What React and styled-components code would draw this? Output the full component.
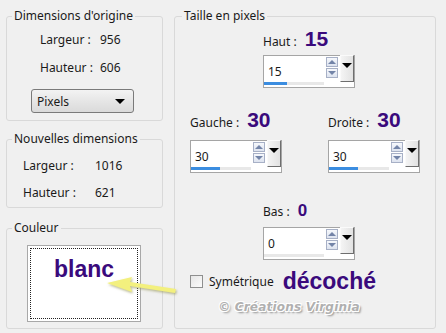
import React from "react";
import styled, { createGlobalStyle } from "styled-components";

const Global = createGlobalStyle`
  html, body {
    margin: 0;
    padding: 0;
    background: #f0f0f0;
  }
  body {
    font-family: "Noto Sans", "Open Sans", sans-serif;
    font-size: 12px;
    color: #1a1a1a;
  }
`

const Page = styled.div`
  position: relative;
  width: 446px;
  height: 333px;
  box-sizing: border-box;
  padding: 8px 10px 0 6px;
  display: flex;
  gap: 11px;
  overflow: hidden;
`

const Column = styled.div`
  display: flex;
  flex-direction: column;
  width: 157px;
`

const Group = styled.fieldset`
  margin: 0 0 ${props => props.bas || 0}px 0;
  padding: 0;
  box-sizing: border-box;
  width: ${props => props.largura}px;
  height: ${props => props.altura}px;
  border: 1px solid #d9d9d9;
  border-radius: 3px;
  display: flex;
  flex-direction: column;
`

const Legende = styled.legend`
  margin-left: ${props => props.decalage || 5}px;
  padding: 0 2px;
  line-height: 16px;
  font-size: 12px;
`

const Valeurs = styled.div`
  display: grid;
  grid-template-columns: ${props => props.colonnes};
  row-gap: ${props => props.ecart}px;
  margin: ${props => props.haut}px 0 0 ${props => props.gauche}px;
  line-height: 16px;
`

const Select = styled.div`
  margin: 13px 0 0 24px;
  width: 103px;
  height: 24px;
  box-sizing: border-box;
  border: 1px solid #7a7a7a;
  border-radius: 3px;
  background: linear-gradient(#f3f3f3, #e6e6e6 50%, #dadada);
  display: flex;
  align-items: center;
  justify-content: space-between;
  padding: 0 8px 0 5px;
`

const Triangle = styled.span`
  width: 0;
  height: 0;
  border-left: ${props => props.taille}px solid transparent;
  border-right: ${props => props.taille}px solid transparent;
  border-top: ${props => props.taille}px solid ${props => props.couleur || "#000"};
`

const Apercu = styled.div`
  margin: 9px 0 0 20px;
  width: 114px;
  height: 77px;
  box-sizing: border-box;
  border: 1px solid #a8a8a8;
  background: #fff;
  padding: 2px;
`

const Pointille = styled.div`
  height: 100%;
  box-sizing: border-box;
  border: 1px dotted #222;
  display: flex;
  justify-content: center;
`

const Gros = styled.span`
  font-family: "Liberation Sans", Arial, sans-serif;
  font-weight: bold;
  font-size: ${props => props.taille}px;
  color: #3a0a7c;
  line-height: 1;
`

const Ligne = styled.div`
  display: flex;
  justify-content: ${props => props.justifie || "center"};
  padding: 0 ${props => props.cote || 0}px;
  margin-top: ${props => props.haut || 0}px;
`

const Champ = styled.div`
  display: flex;
  flex-direction: column;
  align-items: flex-start;
  margin-left: ${props => props.decale || 0}px;
`

const Etiquette = styled.div`
  display: flex;
  align-items: baseline;
  gap: 8px;
  height: 24px;
  margin-bottom: ${props => props.ecart}px;
  white-space: nowrap;
`

const Spin = styled.div`
  display: flex;
  align-items: flex-start;
  width: 92px;
  height: 33px;
  box-sizing: border-box;
  border: 1px solid #a5a5a5;
  background: #fff;
`

const Saisie = styled.div`
  flex: 1;
  display: flex;
  flex-direction: column;
  padding-top: 8px;
`

const Nombre = styled.div`
  line-height: 16px;
  padding-left: 4px;
`

const Piste = styled.div`
  margin-top: 2px;
  height: 3px;
  background: #e8e8e8;
`

const Barre = styled.div`
  height: 3px;
  background: #3b8de0;
`

const Fleches = styled.div`
  display: flex;
  flex-direction: column;
  gap: 1px;
  margin: 1px 2px 0 2px;
`

const PetitBouton = styled.div`
  width: 12px;
  height: 10px;
  box-sizing: border-box;
  border: 1px solid #a7b0c6;
  background: linear-gradient(#f6f8fc, #dde3ef);
  display: flex;
  align-items: center;
  justify-content: center;
`

const TriangleHaut = styled.span`
  width: 0;
  height: 0;
  border-left: 4px solid transparent;
  border-right: 4px solid transparent;
  border-bottom: 4px solid #7384a8;
`

const BoutonMenu = styled.div`
  width: 14px;
  height: 27px;
  box-sizing: border-box;
  margin-top: -1px;
  border-top: 1px solid #fafafa;
  border-left: 1px solid #fafafa;
  border-right: 1px solid #6e6e6e;
  border-bottom: 1px solid #6e6e6e;
  background: linear-gradient(90deg, #f4f4f4, #e2e2e2);
  display: flex;
  justify-content: center;
  padding-top: 7px;
`

const Case = styled.div`
  width: 13px;
  height: 13px;
  box-sizing: border-box;
  border: 1px solid #8e8f8f;
  background: linear-gradient(135deg, #e6e6e6, #fbfbfb);
`

const LigneCase = styled.div`
  display: flex;
  align-items: center;
  gap: 6px;
  margin: 10px 0 0 15px;
`

const Signature = styled.div`
  align-self: center;
  margin: 7px 0 0 -32px;
  font-family: "DejaVu Sans", sans-serif;
  font-weight: bold;
  font-style: italic;
  font-size: 12px;
  letter-spacing: 0.2px;
  color: #b0b0b0;
  text-shadow: 1px 1px 0 #fff, -1px -1px 0 #fff, 1px -1px 0 #fff, -1px 1px 0 #fff, 2px 2px 2px #8a8a8a;
`

const Fleche = styled.svg`
  position: absolute;
  left: 100px;
  top: 272px;
  overflow: visible;
`

const SpinBox = ({ valeur, barre }) => (
  <Spin>
    <Saisie>
      <Nombre>{valeur}</Nombre>
      <Piste>
        <Barre style={{ width: barre }} />
      </Piste>
    </Saisie>
    <Fleches>
      <PetitBouton><TriangleHaut /></PetitBouton>
      <PetitBouton><Triangle taille={4} couleur="#7384a8" /></PetitBouton>
    </Fleches>
    <BoutonMenu><Triangle taille={5} /></BoutonMenu>
  </Spin>
)

const ChampMarge = ({ nom, valeur, taille, ecart, barre, decale }) => (
  <Champ decale={decale}>
    <Etiquette ecart={ecart}>
      <span>{nom} :</span>
      <Gros taille={taille}>{valeur}</Gros>
    </Etiquette>
    <SpinBox valeur={valeur} barre={barre} />
  </Champ>
)

export default function App() {
  return (
    <>
      <Global />
      <Page>
        <Column>
          <Group largura={157} altura={113} bas={10}>
            <Legende>Dimensions d'origine</Legende>
            <Valeurs colonnes="60px auto" ecart={12} haut={8} gauche={33}>
              <span>Largeur :</span><span>956</span>
              <span>Hauteur :</span><span>606</span>
            </Valeurs>
            <Select>
              <span>Pixels</span>
              <Triangle taille={5} />
            </Select>
          </Group>
          <Group largura={157} altura={77} bas={12}>
            <Legende>Nouvelles dimensions</Legende>
            <Valeurs colonnes="72px auto" ecart={11} haut={11} gauche={16}>
              <span>Largeur :</span><span>1016</span>
              <span>Hauteur :</span><span>621</span>
            </Valeurs>
          </Group>
          <Group largura={157} altura={109}>
            <Legende>Couleur</Legende>
            <Apercu>
              <Pointille>
                <Gros taille={23} style={{ marginTop: 9 }}>blanc</Gros>
              </Pointille>
            </Apercu>
          </Group>
        </Column>

        <Group largura={263} altura={321}>
          <Legende decalage={7}>Taille en pixels</Legende>
          <Ligne haut={4}>
            <ChampMarge nom="Haut" valeur="15" taille={21} ecart={3} barre={23} decale={8} />
          </Ligne>
          <Ligne haut={21} justifie="space-between" cote={15}>
            <ChampMarge nom="Gauche" valeur="30" taille={21} ecart={7} barre={29} />
            <ChampMarge nom="Droite" valeur="30" taille={21} ecart={7} barre={29} />
          </Ligne>
          <Ligne haut={29}>
            <ChampMarge nom="Bas" valeur="0" taille={17} ecart={1} barre={0} decale={8} />
          </Ligne>
          <LigneCase>
            <Case />
            <span>Symétrique</span>
            <Gros taille={23} style={{ marginLeft: 3 }}>décoché</Gros>
          </LigneCase>
          <Signature>© Créations Virginia</Signature>
        </Group>

        <Fleche width="80" height="28" viewBox="0 0 80 28">
          <defs>
            <filter id="ombre" x="-20%" y="-50%" width="140%" height="200%">
              <feDropShadow dx="1" dy="1.5" stdDeviation="1" floodColor="#9a9a60" floodOpacity="0.7" />
            </filter>
          </defs>
          <polygon
            points="7,11 32,5 30,10 76,17 75,21 30,14 32,20"
            fill="#f3f07e"
            filter="url(#ombre)"
          />
        </Fleche>
      </Page>
    </>
  );
}
